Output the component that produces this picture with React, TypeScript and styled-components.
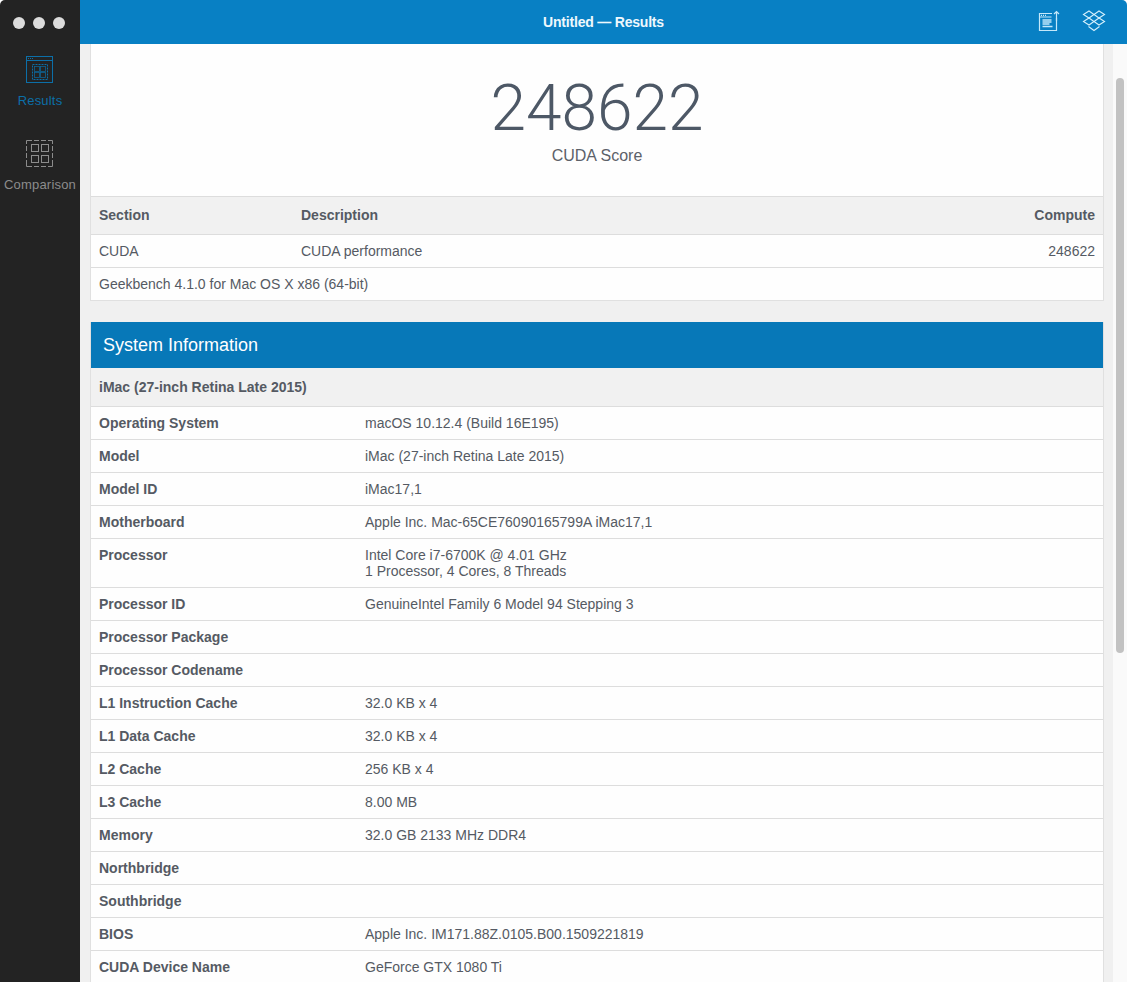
import React from 'react';
import styled, { createGlobalStyle } from 'styled-components';

const GlobalStyle = createGlobalStyle`
  html, body {
    margin: 0;
    padding: 0;
    height: 100%;
    overflow: hidden;
    background: #fff;
  }
  body {
    font-family: "Liberation Sans", Arial, sans-serif;
    font-size: 14px;
    color: #555a63;
  }
`;

const Window = styled.div`
  display: flex;
  width: 1127px;
  height: 982px;
  overflow: hidden;
  border-radius: 5px 5px 0 0;
`;

const Sidebar = styled.aside`
  display: flex;
  flex-direction: column;
  align-items: center;
  flex: 0 0 80px;
  background: #232323;
`;

const TrafficLights = styled.div`
  display: flex;
  align-self: flex-start;
  gap: 8px;
  padding: 17px 0 0 13px;
  height: 38px;
  box-sizing: border-box;
  margin-bottom: 18px;
`;

const Light = styled.span`
  width: 12px;
  height: 12px;
  border-radius: 50%;
  background: #dcdcdc;
`;

const NavItem = styled.div<{ $active?: boolean }>`
  display: flex;
  flex-direction: column;
  align-items: center;
  height: 84px;
  font-size: 13px;
  letter-spacing: 0.2px;
  color: ${({ $active }) => ($active ? '#0c6fa8' : '#8c8c8c')};

  svg {
    display: block;
    margin-bottom: 9px;
  }
`;

const Main = styled.div`
  display: flex;
  flex-direction: column;
  flex: 1;
  min-width: 0;
`;

const TitleBar = styled.header`
  position: relative;
  display: flex;
  align-items: center;
  justify-content: center;
  flex: 0 0 44px;
  background: #0880c4;
  color: #eef8fd;
  font-size: 14px;
  font-weight: 700;
  letter-spacing: -0.2px;
`;

const TitleActions = styled.div`
  position: absolute;
  top: 10px;
  right: 21px;
  display: flex;
  align-items: flex-start;
  gap: 22px;
`;

const Body = styled.div`
  display: flex;
  flex: 1;
  min-height: 0;
`;

const Content = styled.main`
  flex: 1;
  min-width: 0;
  background: #f0f0f0;
  padding: 0 9px 0 10px;
  overflow: hidden;
`;

const ScrollTrack = styled.div`
  flex: 0 0 14px;
  background: #fafafa;
  padding: 34px 0 0 3px;
  box-sizing: border-box;
`;

const ScrollThumb = styled.div`
  width: 8px;
  height: 575px;
  background: #c2c2c2;
  border-radius: 4px;
`;

const Panel = styled.section`
  background: #fefefe;
  border: 1px solid #e0e0e0;
  border-top: none;
  margin-bottom: 21px;
`;

const ScoreBlock = styled.div`
  display: flex;
  flex-direction: column;
  align-items: center;
  height: 153px;
  border-bottom: 1px solid #dddddd;
  box-sizing: border-box;
  padding-top: 29px;
`;

const ScoreValue = styled.div`
  font-family: Roboto, "Liberation Sans", sans-serif;
  font-size: 64px;
  line-height: 72px;
  font-weight: 300;
  color: #4d5866;
`;

const ScoreLabel = styled.div`
  font-size: 16px;
  line-height: 22px;
  color: #5c6169;
`;

const ScoreRow = styled.div<{ $head?: boolean }>`
  display: grid;
  grid-template-columns: 202px 1fr auto;
  align-items: center;
  height: ${({ $head }) => ($head ? '38px' : '33px')};
  box-sizing: border-box;
  padding: ${({ $head }) => ($head ? '0 8px 2px' : '0 8px')};
  border-bottom: 1px solid #dddddd;
  background: ${({ $head }) => ($head ? '#f1f1f1' : '#fefefe')};
  font-weight: ${({ $head }) => ($head ? 700 : 400)};
`;

const FootRow = styled.div`
  display: flex;
  align-items: center;
  height: 32px;
  padding: 0 8px;
`;

const PanelHeading = styled.h2`
  margin: 0;
  display: flex;
  align-items: center;
  height: 46px;
  padding: 0 12px;
  background: #0778b8;
  color: #fff;
  font-size: 18px;
  font-weight: 400;
`;

const SubHeading = styled.div`
  display: flex;
  align-items: center;
  height: 38px;
  padding: 0 8px;
  background: #f1f1f1;
  border-bottom: 1px solid #dddddd;
  font-weight: 700;
`;

const InfoRow = styled.div`
  display: grid;
  grid-template-columns: 266px 1fr;
  box-sizing: border-box;
  min-height: 33px;
  padding: 8px 8px 0;
  border-bottom: 1px solid #dddddd;
  line-height: 16px;
`;

const InfoName = styled.div`
  font-weight: 700;
`;

const InfoValue = styled.div`
  white-space: pre-line;
  padding-bottom: 8px;
`;

const infoRows: [string, string][] = [
  ['Operating System', 'macOS 10.12.4 (Build 16E195)'],
  ['Model', 'iMac (27-inch Retina Late 2015)'],
  ['Model ID', 'iMac17,1'],
  ['Motherboard', 'Apple Inc. Mac-65CE76090165799A iMac17,1'],
  ['Processor', 'Intel Core i7-6700K @ 4.01 GHz\n1 Processor, 4 Cores, 8 Threads'],
  ['Processor ID', 'GenuineIntel Family 6 Model 94 Stepping 3'],
  ['Processor Package', ''],
  ['Processor Codename', ''],
  ['L1 Instruction Cache', '32.0 KB x 4'],
  ['L1 Data Cache', '32.0 KB x 4'],
  ['L2 Cache', '256 KB x 4'],
  ['L3 Cache', '8.00 MB'],
  ['Memory', '32.0 GB 2133 MHz DDR4'],
  ['Northbridge', ''],
  ['Southbridge', ''],
  ['BIOS', 'Apple Inc. IM171.88Z.0105.B00.1509221819'],
  ['CUDA Device Name', 'GeForce GTX 1080 Ti'],
];

const ResultsIcon = () => (
  <svg width="28" height="28" viewBox="0 0 28 28" fill="none" stroke="#0c6fa8" strokeWidth="1">
    <rect x="0.500" y="0.500" width="26" height="26" />
    <path d="M0.500 4.500h26" />
    <path d="M2 2.500h1M4 2.500h1M6 2.500h1" />
    <rect x="6.500" y="8.500" width="15" height="15" strokeDasharray="2 1" />
    <g strokeWidth="0.800" opacity="0.850">
      <rect x="8.500" y="10.500" width="5" height="5" />
      <rect x="14.500" y="10.500" width="5" height="5" />
      <rect x="8.500" y="16.500" width="5" height="5" />
      <rect x="14.500" y="16.500" width="5" height="5" />
    </g>
  </svg>
);

const ComparisonIcon = () => (
  <svg width="28" height="28" viewBox="0 0 28 28" fill="none" stroke="#8c8c8c" strokeWidth="1">
    <path d="M0.500 4V0.500H6M8 0.500h5M15 0.500h5M22 0.500h4.500V4M26.500 6v5M26.500 13v5M26.500 20v6.500H22M20 26.500h-5M13 26.500H8M6 26.500H0.500V20M0.500 18v-5M0.500 11V6" />
    <rect x="5.500" y="4.500" width="7" height="7" />
    <rect x="15.500" y="4.500" width="7" height="7" />
    <rect x="5.500" y="15.500" width="7" height="7" />
    <rect x="15.500" y="15.500" width="7" height="7" />
  </svg>
);

const ShareIcon = () => (
  <svg width="22" height="22" viewBox="0 0 22 22" fill="none" stroke="#c4e8fa" strokeWidth="1.200">
    <path d="M14 3.500H1.500v17h17V8" />
    <path d="M1.500 7h12" />
    <path d="M18.500 11V1.500M16 4l2.500-2.500L21 4" />
    <path d="M3 5.300h1M5 5.300h1M7 5.300h1" />
    <path d="M4.500 10h9M4.500 12h9M4.500 14h7M4.500 16.500h10" strokeWidth="1.300" />
  </svg>
);

const DropboxIcon = () => (
  <svg width="24" height="22" viewBox="0 0 24 22" fill="none" stroke="#d3effc" strokeWidth="1.100">
    <path d="M7 1l5 3.500L7 8 1.500 4.500z" />
    <path d="M17 1l-5 3.500L17 8l5.500-3.500z" />
    <path d="M7 8l5 3.500L7 15l-5.500-3.500z" />
    <path d="M17 8l-5 3.500 5 3.500 5.500-3.500z" />
    <path d="M6.500 16.500l5.500 4 5.500-4" />
  </svg>
);

export default function App() {
  return (
    <>
      <GlobalStyle />
      <Window>
        <Sidebar>
          <TrafficLights>
            <Light />
            <Light />
            <Light />
          </TrafficLights>
          <NavItem $active>
            <ResultsIcon />
            Results
          </NavItem>
          <NavItem>
            <ComparisonIcon />
            Comparison
          </NavItem>
        </Sidebar>
        <Main>
          <TitleBar>
            Untitled — Results
            <TitleActions>
              <ShareIcon />
              <DropboxIcon />
            </TitleActions>
          </TitleBar>
          <Body>
            <Content>
              <Panel>
                <ScoreBlock>
                  <ScoreValue>248622</ScoreValue>
                  <ScoreLabel>CUDA Score</ScoreLabel>
                </ScoreBlock>
                <ScoreRow $head>
                  <span>Section</span>
                  <span>Description</span>
                  <span>Compute</span>
                </ScoreRow>
                <ScoreRow>
                  <span>CUDA</span>
                  <span>CUDA performance</span>
                  <span>248622</span>
                </ScoreRow>
                <FootRow>Geekbench 4.1.0 for Mac OS X x86 (64-bit)</FootRow>
              </Panel>
              <Panel>
                <PanelHeading>System Information</PanelHeading>
                <SubHeading>iMac (27-inch Retina Late 2015)</SubHeading>
                {infoRows.map(([name, value]) => (
                  <InfoRow key={name}>
                    <InfoName>{name}</InfoName>
                    <InfoValue>{value}</InfoValue>
                  </InfoRow>
                ))}
              </Panel>
            </Content>
            <ScrollTrack>
              <ScrollThumb />
            </ScrollTrack>
          </Body>
        </Main>
      </Window>
    </>
  );
}
